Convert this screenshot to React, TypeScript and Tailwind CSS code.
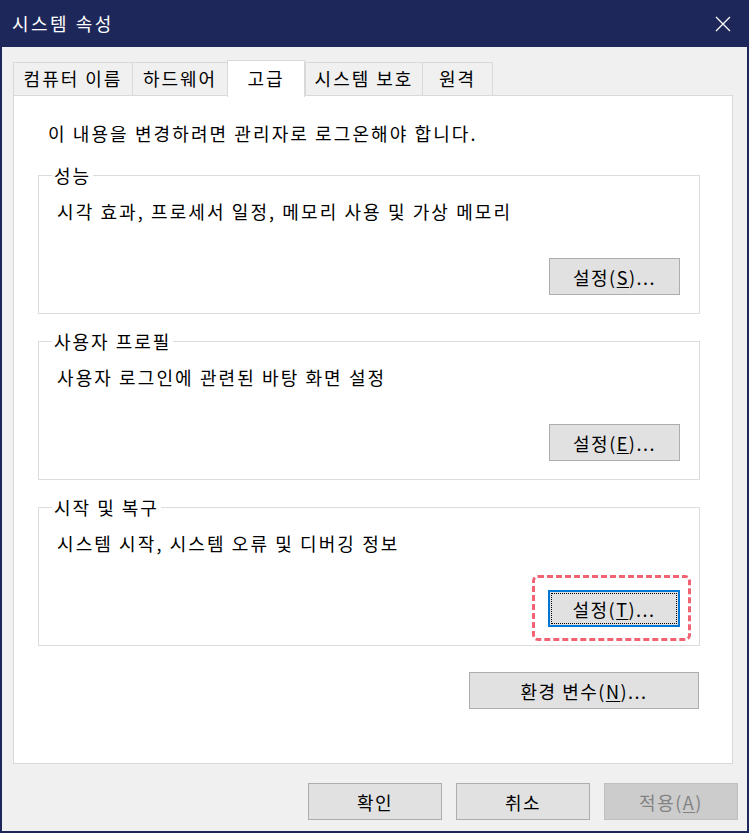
import React from "react";

const font = { fontFamily: '"Noto Sans CJK KR", "Noto Sans", sans-serif' };

type BtnProps = {
  label: string;
  mnemonic?: string;
  suffix?: string;
  className?: string;
  disabled?: boolean;
  focused?: boolean;
};

function Button({ label, mnemonic, suffix = "", className = "", disabled, focused }: BtnProps) {
  const base = disabled
    ? "bg-[#cccccc] border-[#bfbfbf] text-[#838383]"
    : focused
      ? "bg-[#e1e1e1] border-2 border-[#0078d7] text-black"
      : "bg-[#e1e1e1] border-[#adadad] text-black";
  return (
    <div
      className={`relative flex h-[37px] items-center justify-center border text-[18px] leading-none tracking-[1.5px] ${base} ${className}`}
    >
      {focused && <span className="pointer-events-none absolute inset-[1px] border border-dotted border-black" />}
      <span>
        {label}
        {mnemonic && (
          <>
            (<u className="underline-offset-2">{mnemonic}</u>)
          </>
        )}
        {suffix}
      </span>
    </div>
  );
}

type GroupProps = {
  title: string;
  desc: string;
  button: React.ReactNode;
};

function Group({ title, desc, button }: GroupProps) {
  return (
    <fieldset className="ml-[24px] mr-[32px] border border-[#dcdcdc] px-[18px] pb-[18px]">
      <legend className="ml-[-5px] px-[2px] text-[18px] leading-[26px] tracking-[2px]">{title}</legend>
      <div className="pt-[10px] text-[18px] leading-[26px] tracking-[2.1px]">{desc}</div>
      <div className="mt-[34px] flex justify-end pr-[1px]">{button}</div>
    </fieldset>
  );
}

const tabs = [
  { label: "컴퓨터 이름", w: "w-[119px]" },
  { label: "하드웨어", w: "w-[95px]" },
  { label: "고급", w: "w-[78px]", active: true },
  { label: "시스템 보호", w: "w-[117px]" },
  { label: "원격", w: "w-[71px]", last: true },
];

export default function App() {
  return (
    <div style={font} className="flex h-[833px] w-[749px] flex-col bg-[#1e2759] text-black">
      {/* title bar */}
      <div className="flex h-[47px] shrink-0 items-center justify-between pl-[12px] pr-[18px] text-white">
        <span className="text-[18px] tracking-[2.5px]">시스템 속성</span>
        <svg width="18" height="18" viewBox="0 0 18 18" className="mr-[-1px]">
          <path d="M2 2 L16 16 M16 2 L2 16" stroke="white" strokeWidth="1.3" fill="none" />
        </svg>
      </div>

      {/* body */}
      <div className="mx-[2px] mb-[2px] flex flex-1 flex-col bg-[#f0f0f0] pl-[11px]">
        {/* tabs */}
        <div className="relative z-10 mt-[13px] flex h-[35px] items-end">
          {tabs.map((t) =>
            t.active ? (
              <div
                key={t.label}
                className={`${t.w} -mb-[2px] flex h-[37px] items-start justify-center border-x border-t border-[#d9d9d9] bg-white pt-[4px] text-[18px] tracking-[2px]`}
              >
                {t.label}
              </div>
            ) : (
              <div
                key={t.label}
                className={`${t.w} flex h-[33px] items-center justify-center border-l border-t ${t.last ? "border-r" : ""} border-[#d9d9d9] bg-[#f0f0f0] pb-[1px] text-[18px] tracking-[2px]`}
              >
                {t.label}
              </div>
            )
          )}
        </div>

        {/* panel */}
        <div className="flex h-[669px] w-[720px] flex-col border border-[#d9d9d9] bg-white">
          <div className="pl-[34px] pt-[24px] text-[18px] leading-[26px] tracking-[2.1px]">
            이 내용을 변경하려면 관리자로 로그온해야 합니다.
          </div>

          <div className="mt-[16px]">
            <Group
              title="성능"
              desc="시각 효과, 프로세서 일정, 메모리 사용 및 가상 메모리"
              button={<Button label="설정" mnemonic="S" suffix="..." className="w-[131px]" />}
            />
          </div>

          <div className="mt-[14px]">
            <Group
              title="사용자 프로필"
              desc="사용자 로그인에 관련된 바탕 화면 설정"
              button={<Button label="설정" mnemonic="E" suffix="..." className="w-[131px]" />}
            />
          </div>

          <div className="mt-[14px]">
            <Group
              title="시작 및 복구"
              desc="시스템 시작, 시스템 오류 및 디버깅 정보"
              button={
                <div className="relative">
                  <Button label="설정" mnemonic="T" suffix="..." focused className="w-[132px]" />
                  <span className="pointer-events-none absolute -bottom-[14px] -left-[16px] -right-[11px] -top-[15px] rounded-[6px] border-[3px] border-dashed border-[#ee3b4f]/80" />
                </div>
              }
            />
          </div>

          <div className="mr-[33px] mt-[26px] flex justify-end">
            <Button label="환경 변수" mnemonic="N" suffix="..." className="w-[230px]" />
          </div>
        </div>

        {/* dialog buttons */}
        <div className="mr-[9px] mt-[19px] flex justify-end gap-[14px]">
          <Button label="확인" className="w-[134px]" />
          <Button label="취소" className="w-[134px]" />
          <Button label="적용" mnemonic="A" disabled className="w-[134px]" />
        </div>
      </div>
    </div>
  );
}
